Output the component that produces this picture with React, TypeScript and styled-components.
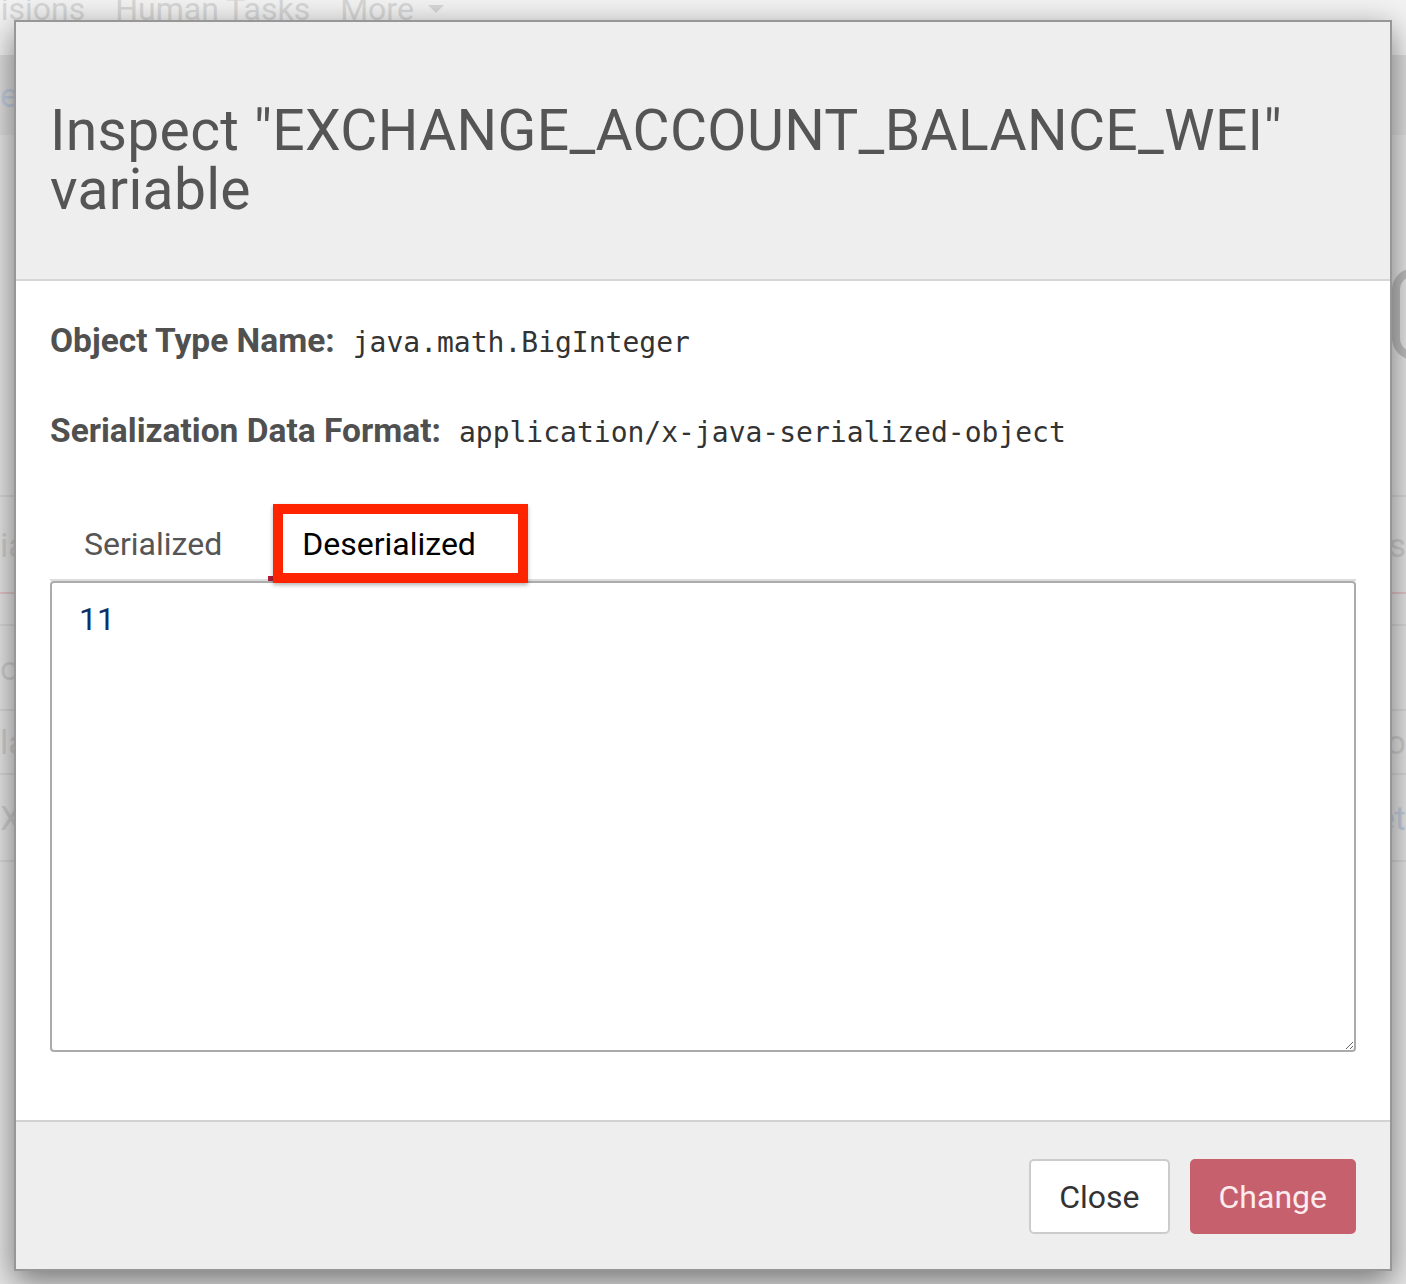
import React from "react";
import styled, { createGlobalStyle } from "styled-components";

const Global = createGlobalStyle`
  html, body { margin: 0; padding: 0; }
  body { background: #e4e4e4; overflow: hidden; }
  * { box-sizing: border-box; }
`;

const SANS = `Roboto, "Liberation Sans", sans-serif`;
const MONO = `"DejaVu Sans Mono", "Liberation Mono", monospace`;

const Page = styled.div`
  position: relative;
  width: 1406px;
  height: 1284px;
  overflow: hidden;
  background: #e6e6e6;
  font-family: ${SANS};
`;

const NavBar = styled.div`
  height: 55px;
  background: #f2f2f2;
  display: flex;
  align-items: flex-end;
  gap: 30px;
  padding-bottom: 30px;
  margin-left: -54px;
  color: #d6d6d6;
  font-size: 32px;
  line-height: 1;
`;

const NavItem = styled.span`
  display: inline-flex;
  align-items: center;
  gap: 14px;
`;

const Caret = styled.span`
  width: 0;
  height: 0;
  border-left: 8px solid transparent;
  border-right: 8px solid transparent;
  border-top: 8px solid #d6d6d6;
`;

const SubHeader = styled.div`
  height: 80px;
  background: #dedede;
  display: flex;
  align-items: center;
  color: #c4cddc;
  font-size: 34px;
`;

const Table = styled.div`
  display: flex;
  flex-direction: column;
  padding-top: 130px;
`;

const Row = styled.div<{ $h: number; $accent?: boolean }>`
  height: ${(p) => p.$h}px;
  border-bottom: 2px solid ${(p) => (p.$accent ? "#e3c6c9" : "#d9d9d9")};
  display: flex;
  align-items: center;
  justify-content: space-between;
  color: #d0d0d0;
  font-size: 34px;
`;

const Pill = styled.span`
  align-self: flex-start;
  margin-top: 3px;
  width: 60px;
  height: 92px;
  border: 8px solid #bdbdbd;
  border-radius: 22px;
  margin-right: -46px;
`;

const Cell = styled.span<{ $blue?: boolean }>`
  color: ${(p) => (p.$blue ? "#c3cfe0" : "#cfcfcf")};
`;

const Backdrop = styled.div`
  position: absolute;
  inset: 0;
  padding: 20px 14px 0;
`;

const Modal = styled.div`
  width: 1378px;
  height: 1251px;
  display: flex;
  flex-direction: column;
  background: #fff;
  border: 2px solid #979797;
  box-shadow: 0 10px 30px rgba(0, 0, 0, 0.5);
`;

const Header = styled.div`
  background: #eeeeee;
  border-bottom: 2px solid #d6d6d6;
  padding: 79px 34px 60px;
`;

const Title = styled.h1`
  margin: 0;
  max-width: 1280px;
  font-family: ${SANS};
  font-weight: 400;
  font-size: 57px;
  letter-spacing: 0.3px;
  line-height: 59px;
  color: #555555;
`;

const Body = styled.div`
  flex: 1;
  padding: 40px 34px 0;
  display: flex;
  flex-direction: column;
`;

const InfoRow = styled.div`
  display: flex;
  align-items: baseline;
  gap: 18px;
  height: 40px;
  margin-bottom: 50px;
`;

const Label = styled.span`
  font-family: ${SANS};
  font-weight: 700;
  font-size: 33.5px;
  letter-spacing: 0px;
  color: #505050;
  line-height: 40px;
`;

const Mono = styled.span`
  font-family: ${MONO};
  font-size: 28px;
  color: #333;
  line-height: 40px;
`;

const TabBar = styled.div`
  margin-top: 3px;
  display: flex;
  gap: 12px;
  border-bottom: 2px solid #dcdcdc;
`;

const Tab = styled.div<{ $active?: boolean }>`
  position: relative;
  padding: 22px 34px 14px;
  font-family: ${SANS};
  font-size: 32px;
  line-height: 36px;
  color: ${(p) => (p.$active ? "#000" : "#555")};
  border-bottom: 5px solid ${(p) => (p.$active ? "#ad1d3a" : "transparent")};
  margin-bottom: -2px;
`;

const Annotation = styled.div`
  position: absolute;
  left: 5px;
  top: 0;
  width: 255px;
  height: 79px;
  border: 10px solid #ff2400;
  box-shadow: 0 2px 4px rgba(0, 0, 0, 0.3);
  pointer-events: none;
`;

const Editor = styled.textarea`
  display: block;
  width: 1306px;
  height: 471px;
  border: 2px solid #ababab;
  border-radius: 4px;
  padding: 14px 27px;
  font-family: ${SANS};
  font-size: 32px;
  line-height: 45px;
  color: #0e3066;
  background: #fff;
  outline: none;
`;

const Footer = styled.div`
  background: #eeeeee;
  border-top: 2px solid #d2d2d2;
  padding: 37px 34px 35px;
  display: flex;
  justify-content: flex-end;
  gap: 20px;
`;

const Button = styled.button<{ $primary?: boolean }>`
  height: 75px;
  padding: 0 ${(p) => (p.$primary ? 27 : 28)}px;
  border-radius: 5px;
  font-family: ${SANS};
  font-size: 32px;
  border: 2px solid ${(p) => (p.$primary ? "#c6606c" : "#cccccc")};
  background: ${(p) => (p.$primary ? "#c6606c" : "#ffffff")};
  color: ${(p) => (p.$primary ? "#fbecee" : "#333333")};
`;

export default function App() {
  return (
    <>
      <Global />
      <Page>
        <NavBar>
          <NavItem>Decisions</NavItem>
          <NavItem>Human Tasks</NavItem>
          <NavItem>
            More <Caret />
          </NavItem>
        </NavBar>
        <SubHeader>
          <Cell $blue>e</Cell>
        </SubHeader>
        <Table>
          <Row $h={232}>
            <Cell />
            <Pill />
          </Row>
          <Row $h={97} $accent>
            <Cell>ia</Cell>
            <Cell>s</Cell>
          </Row>
          <Row $h={32} />
          <Row $h={85}>
            <Cell>o</Cell>
            <Cell />
          </Row>
          <Row $h={64}>
            <Cell>la</Cell>
            <Cell>co</Cell>
          </Row>
          <Row $h={87}>
            <Cell>X</Cell>
            <Cell $blue>et</Cell>
          </Row>
        </Table>
        <Backdrop>
          <Modal>
            <Header>
              <Title>Inspect "EXCHANGE_ACCOUNT_BALANCE_WEI" variable</Title>
            </Header>
            <Body>
              <InfoRow>
                <Label>Object Type Name:</Label>
                <Mono>java.math.BigInteger</Mono>
              </InfoRow>
              <InfoRow>
                <Label>Serialization Data Format:</Label>
                <Mono>application/x-java-serialized-object</Mono>
              </InfoRow>
              <TabBar>
                <Tab>Serialized</Tab>
                <Tab $active>
                  Deserialized
                  <Annotation />
                </Tab>
              </TabBar>
              <Editor defaultValue="11" spellCheck={false} />
            </Body>
            <Footer>
              <Button>Close</Button>
              <Button $primary>Change</Button>
            </Footer>
          </Modal>
        </Backdrop>
      </Page>
    </>
  );
}
